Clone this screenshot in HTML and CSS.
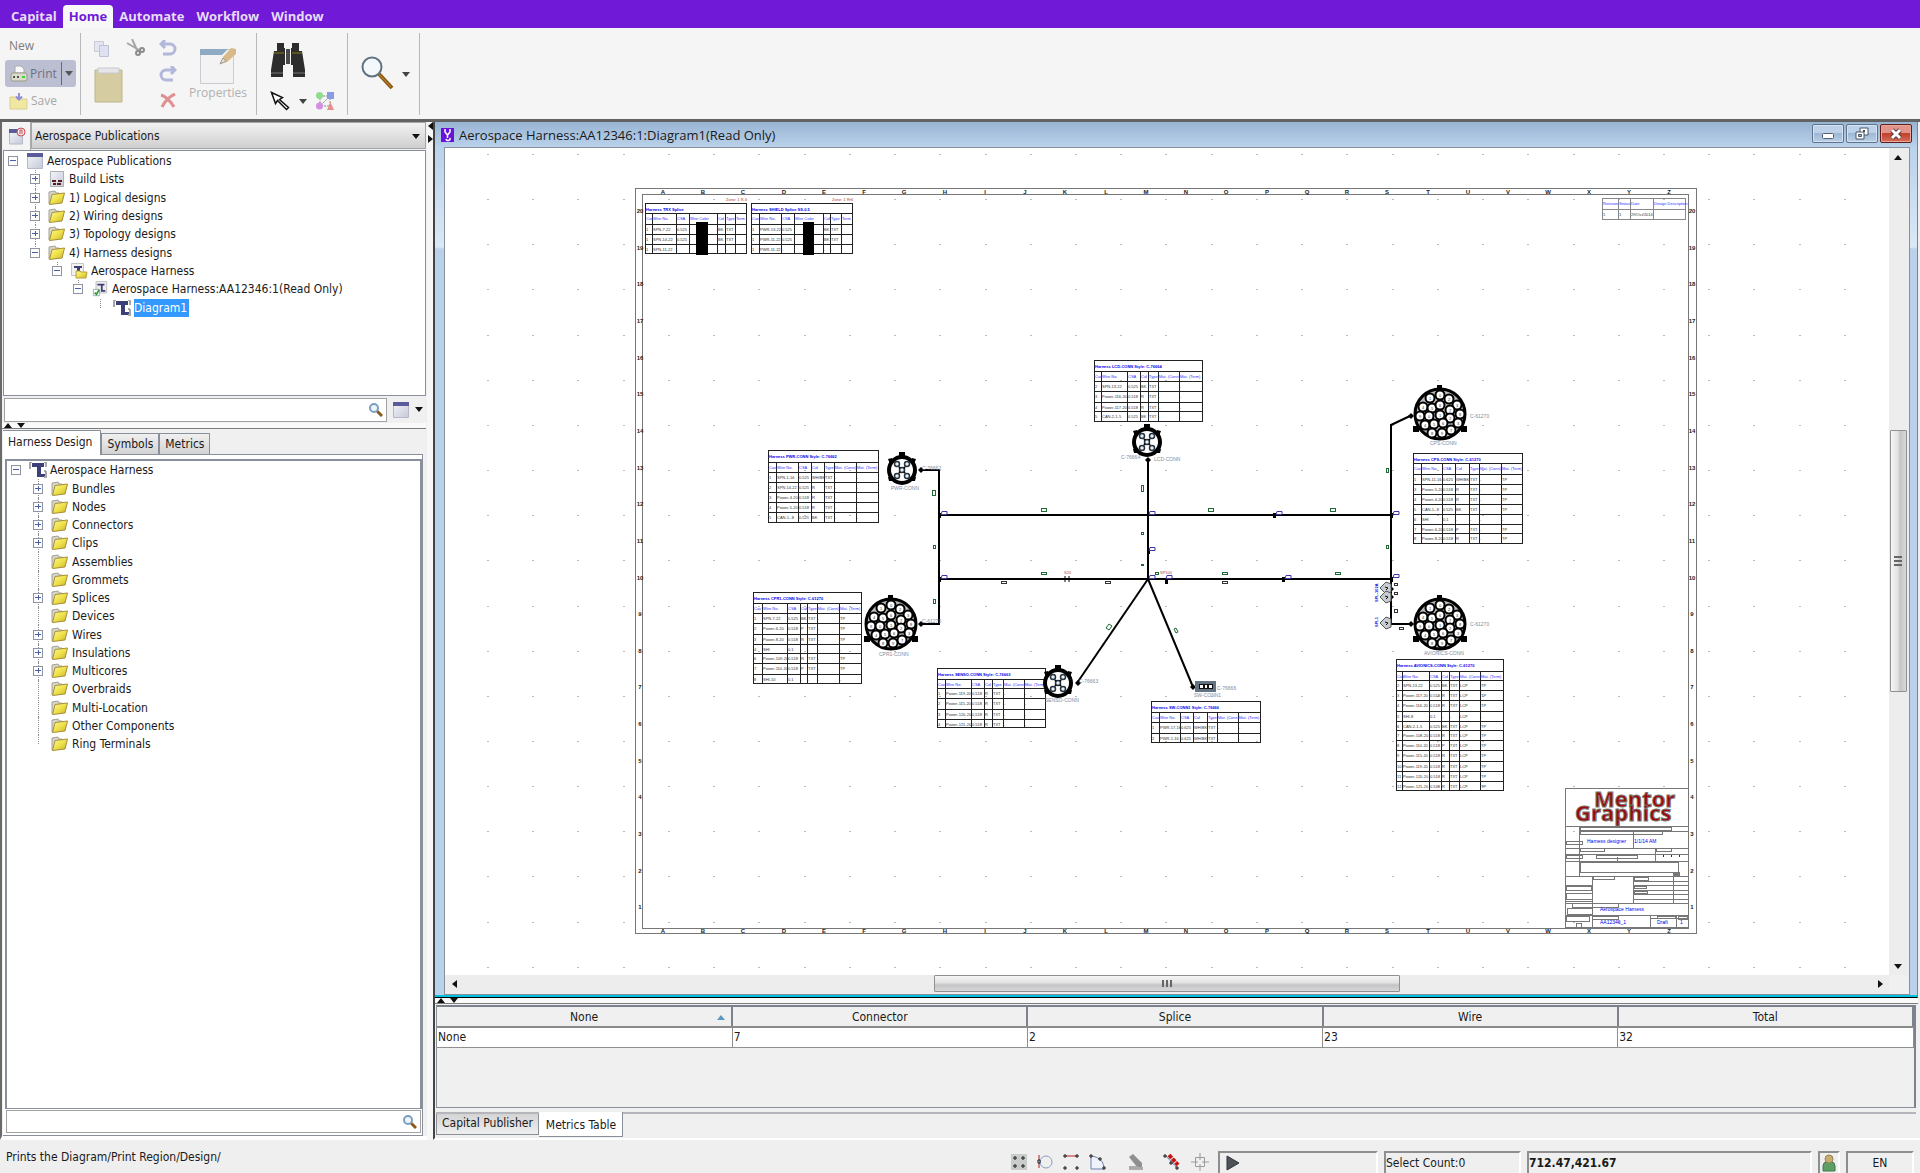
FILE: index.html
```html
<!DOCTYPE html>
<html lang="en">
<head>
<meta charset="utf-8">
<title>Capital</title>
<link rel="stylesheet" href="styles.css">
</head>
<body>
<svg class="defs" aria-hidden="true">
  <defs>
    <linearGradient id="gFolder" x1="0" y1="0" x2="1" y2="1"><stop offset="0" stop-color="#fbf7a0"/><stop offset=".5" stop-color="#efe24a"/><stop offset="1" stop-color="#c9b12a"/></linearGradient>
    <linearGradient id="gWin" x1="0" y1="0" x2="1" y2="1"><stop offset="0" stop-color="#f4f5fa"/><stop offset="1" stop-color="#c5c9d8"/></linearGradient>
  </defs>
  <symbol id="folder" viewBox="0 0 18 16"><path d="M1 14V2l6-1 1 2h3v2" fill="#d8d6cc" stroke="#a5a294"/><path d="M4 4.500l12.500-1.500-2.500 10-12.500 1.500z" fill="url(#gFolder)" stroke="#a58f3a"/></symbol>
  <symbol id="win" viewBox="0 0 16 16"><path d="M.5 1h15v14.500H.5z" fill="url(#gWin)" stroke="#b4b8c8"/><path d="M0 0h16v4H0z" fill="#5a5c9a"/></symbol>
  <symbol id="build" viewBox="0 0 16 16"><path d="M1.500.5h13v15h-13z" fill="url(#gWin)" stroke="#b0b0b0"/><path d="M3 9h4v2H3zM9 9h4v2H9zM4 12h3v2H4zM8 12h4v2H8z" fill="#5a1c1c"/></symbol>
  <symbol id="tee" viewBox="0 0 18 16"><path d="M3 1h12v4h-3v7h4v3H8V5H3z" fill="#3d3f78"/><path d="M1 0v7M3 0H1M17 0v5M15 0h2M17 9v7M15 9h2M15 15h2" stroke="#a8a8a8" stroke-width="2" fill="none"/></symbol>
  <symbol id="teefolder" viewBox="0 0 18 16"><path d="M1.500.5h12v12h-12z" fill="#f2f2f2" stroke="#c4c4c4"/><path d="M4 3h8v2h-2v4H7V5H4z" fill="#3d3f78"/><path d="M6 8h4l1 1h6l-1 6H6z" fill="url(#gFolder)" stroke="#b8a040"/></symbol>
  <symbol id="teecheck" viewBox="0 0 18 18"><path d="M4.500.5h12v13h-12z" fill="#eee" stroke="#bbb"/><path d="M6 3h8v2h-2v5h3v2h-5V5H6z" fill="#3d3f78"/><path d="M1.500 9.500h7v7h-7z" fill="#fff" stroke="#9aa"/><path d="M3 13l2 2 3-5" stroke="#2c9a3c" stroke-width="2" fill="none"/></symbol>
  <symbol id="lens" viewBox="0 0 14 14"><path d="M8 8l5 5" stroke="#8a5a1c" stroke-width="3"/><circle cx="5" cy="5" r="4" fill="#eef6fc" stroke="#7c9fc0" stroke-width="2"/></symbol>
</svg>

<nav class="menubar">
  <button class="menu">Capital</button>
  <button class="menu active">Home</button>
  <button class="menu">Automate</button>
  <button class="menu">Workflow</button>
  <button class="menu">Window</button>
</nav>

<header class="ribbon">
  <div class="group file">
    <button class="rb new">New</button>
    <div class="split">
      <button class="rb print"><svg width="18" height="17" viewBox="0 0 18 17"><path d="M5 8V1h6l3 3v4z" fill="#fafafa" stroke="#aaa"/><rect x="1" y="8" width="16" height="8" rx="2" fill="#dcdccc" stroke="#999985"/><path d="M3 12h2M7 12h2" stroke="#555" stroke-width="2"/><path d="M12 12h3" stroke="#3fd43f" stroke-width="2"/></svg>Print</button>
      <button class="drop" aria-label="Print options"><i class="tri"></i></button>
    </div>
    <button class="rb save"><svg width="20" height="18" viewBox="0 0 20 18"><path d="M1 17V5h6l1 2h10v10z" fill="#f0e7a0" stroke="#d8cf90"/><path d="M10 1v6M7 4.500l3 3 3-3" stroke="#8e90d8" stroke-width="2" fill="none"/></svg>Save</button>
  </div>
  <div class="group edit">
    <button class="ic copy" aria-label="Copy"><svg width="17" height="17" viewBox="0 0 17 17"><path d="M1.500 1.500h9v10h-9z" fill="#e4e5f0" stroke="#c8cad8"/><path d="M6.500 5.500h9v11h-9z" fill="#dfe1f0" stroke="#bfc2d6"/></svg></button>
    <button class="ic cut" aria-label="Cut"><svg width="20" height="18" viewBox="0 0 20 18"><path d="M1 4l12 7M6 0l5 11" stroke="#a6a6a6" stroke-width="2"/><circle cx="16" cy="11" r="2" fill="none" stroke="#8c8c8c" stroke-width="2"/><circle cx="12" cy="14" r="2" fill="none" stroke="#8c8c8c" stroke-width="2"/></svg></button>
    <button class="ic undo" aria-label="Undo"><svg width="18" height="16" viewBox="0 0 18 16"><path d="M3 4h8a4.500 4.500 0 0 1 0 10H4M6 0L2 4l4 4" stroke="#b3b7dc" stroke-width="3" fill="none"/></svg></button>
    <button class="ic paste" aria-label="Paste"><svg width="29" height="36" viewBox="0 0 29 36"><path d="M1 3h27v32H1z" fill="#d5cca2" stroke="#c0b68a"/><path d="M4 1h21v5H4z" fill="#e6e6ea" stroke="#c8c8d0"/></svg></button>
    <button class="ic redo" aria-label="Redo"><svg width="18" height="16" viewBox="0 0 18 16"><path d="M15 4H7a4.500 4.500 0 0 0 0 10h7M12 0l4 4-4 4" stroke="#b3b7dc" stroke-width="3" fill="none"/></svg></button>
    <button class="ic del" aria-label="Delete"><svg width="16" height="15" viewBox="0 0 16 15"><path d="M1 2c6 2 10 7 13 12M15 1C8 4 5 8 2 14" stroke="#e09090" stroke-width="3" fill="none"/></svg></button>
    <button class="props"><svg width="38" height="37" viewBox="0 0 38 37"><path d="M1.500 2.500h33v34h-33z" fill="#f3f3f3" stroke="#c9ccd2"/><path d="M1 2h28l-6 6H1z" fill="#8fabc4"/><path d="M21 17l3-7 8-9 5 1v5l-9 8z" fill="#d9b98a"/><path d="M21 17l3-6 3 3z" fill="#f2e6cf" stroke="#999"/></svg>Properties</button>
  </div>
  <div class="group find">
    <button class="ic" aria-label="Find"><svg width="36" height="36" viewBox="0 0 36 36"><path d="M7 1h7v5h1v17H13v12H1v-7L4 9h3zM29 1h-7v5h-1v17h2v12h12v-7L32 9h-3z" fill="#2d2d2d"/><path d="M16 7h4v15h-4z" fill="#4a4a4a"/><path d="M4 11h10M22 11h10" stroke="#8c7a1e"/><path d="M1 31h12M23 31h12" stroke="#777"/></svg></button>
    <div class="tools">
      <button class="ic" aria-label="Select"><svg width="20" height="20" viewBox="0 0 20 20"><path d="M1.500 1.500l4 11 2-3 9 9 2-2-9-8 3-2z" fill="#fff" stroke="#111" stroke-width="1.500"/></svg></button>
      <button class="ic" aria-label="Select options"><i class="tri"></i></button>
      <button class="ic" aria-label="Filter"><svg width="18" height="18" viewBox="0 0 18 18"><path d="M4 4h10v10H4zM5 13l9-9" fill="none" stroke="#888" stroke-dasharray="2 1"/><circle cx="3.500" cy="3.500" r="3.500" fill="#8fdc8f"/><path d="M11 0h7v7h-7z" fill="#8a9be6"/><circle cx="3.500" cy="14" r="3.500" fill="#d38fe6"/><path d="M14.500 10l3.500 8h-7z" fill="#e68f8f"/></svg></button>
    </div>
  </div>
  <div class="group zoomer">
    <button class="ic" aria-label="Zoom"><svg width="34" height="36" viewBox="0 0 34 36"><path d="M18 18l13 14" stroke="#8a5a14" stroke-width="4"/><path d="M17 17l13 14" stroke="#c88f38" stroke-width="1"/><circle cx="11" cy="11" r="9.500" fill="#f4f8fb" stroke="#5e7282" stroke-width="2"/></svg></button>
    <button class="ic" aria-label="Zoom options"><i class="tri"></i></button>
  </div>
</header>

<main class="workspace">
  <aside class="side">
    <div class="picker">
      <button class="pick" aria-label="Close project"><svg width="18" height="18" viewBox="0 0 18 18"><path d="M1.500 3h13v14h-13z" fill="url(#gWin)" stroke="#b4b8c8"/><path d="M1 2h10v4H1z" fill="#5a5c9a"/><circle cx="13" cy="5" r="4" fill="#fbeaea" stroke="#c84a50"/><path d="M11 6h4M12 5V3h2v2" stroke="#c84a50" fill="none"/></svg></button>
      <div class="combo"><select aria-label="Project"><option>Aerospace Publications</option></select><i class="tri"></i></div>
    </div>
    <ul class="tree project">
      <li class="d0"><button class="ex minus" aria-label="Collapse"></button><svg class="ti"><use href="#win"/></svg><span>Aerospace Publications</span></li>
      <li class="d1"><button class="ex" aria-label="Expand"></button><svg class="ti"><use href="#build"/></svg><span>Build Lists</span></li>
      <li class="d1"><button class="ex" aria-label="Expand"></button><svg class="ti"><use href="#folder"/></svg><span>1) Logical designs</span></li>
      <li class="d1"><button class="ex" aria-label="Expand"></button><svg class="ti"><use href="#folder"/></svg><span>2) Wiring designs</span></li>
      <li class="d1"><button class="ex" aria-label="Expand"></button><svg class="ti"><use href="#folder"/></svg><span>3) Topology designs</span></li>
      <li class="d1 last"><button class="ex minus" aria-label="Collapse"></button><svg class="ti"><use href="#folder"/></svg><span>4) Harness designs</span></li>
      <li class="d2 last"><button class="ex minus" aria-label="Collapse"></button><svg class="ti"><use href="#teefolder"/></svg><span>Aerospace Harness</span></li>
      <li class="d3 last"><button class="ex minus" aria-label="Collapse"></button><svg class="ti"><use href="#teecheck"/></svg><span>Aerospace Harness:AA12346:1(Read Only)</span></li>
      <li class="d4 last"><i class="noex"></i><svg class="ti"><use href="#tee"/></svg><span class="selected">Diagram1</span></li>
    </ul>
    <div class="searchrow">
      <div class="search"><input type="text" aria-label="Search project"><svg width="14" height="14"><use href="#lens"/></svg></div>
      <button class="view" aria-label="View"><svg width="16" height="16"><use href="#win"/></svg><i class="tri"></i></button>
    </div>
    <div class="hsplit"><i class="tri up"></i><i class="tri"></i></div>
    <div class="tabs">
      <button class="tab on">Harness Design</button><button class="tab">Symbols</button><button class="tab">Metrics</button>
    </div>
    <section class="harness">
      <ul class="tree parts">
        <li class="d0"><button class="ex minus" aria-label="Collapse"></button><svg class="ti"><use href="#tee"/></svg><span>Aerospace Harness</span></li>
        <li class="d1"><button class="ex" aria-label="Expand"></button><svg class="ti"><use href="#folder"/></svg><span>Bundles</span></li>
        <li class="d1"><button class="ex" aria-label="Expand"></button><svg class="ti"><use href="#folder"/></svg><span>Nodes</span></li>
        <li class="d1"><button class="ex" aria-label="Expand"></button><svg class="ti"><use href="#folder"/></svg><span>Connectors</span></li>
        <li class="d1"><button class="ex" aria-label="Expand"></button><svg class="ti"><use href="#folder"/></svg><span>Clips</span></li>
        <li class="d1"><i class="noex"></i><svg class="ti"><use href="#folder"/></svg><span>Assemblies</span></li>
        <li class="d1"><i class="noex"></i><svg class="ti"><use href="#folder"/></svg><span>Grommets</span></li>
        <li class="d1"><button class="ex" aria-label="Expand"></button><svg class="ti"><use href="#folder"/></svg><span>Splices</span></li>
        <li class="d1"><i class="noex"></i><svg class="ti"><use href="#folder"/></svg><span>Devices</span></li>
        <li class="d1"><button class="ex" aria-label="Expand"></button><svg class="ti"><use href="#folder"/></svg><span>Wires</span></li>
        <li class="d1"><button class="ex" aria-label="Expand"></button><svg class="ti"><use href="#folder"/></svg><span>Insulations</span></li>
        <li class="d1"><button class="ex" aria-label="Expand"></button><svg class="ti"><use href="#folder"/></svg><span>Multicores</span></li>
        <li class="d1"><i class="noex"></i><svg class="ti"><use href="#folder"/></svg><span>Overbraids</span></li>
        <li class="d1"><i class="noex"></i><svg class="ti"><use href="#folder"/></svg><span>Multi-Location</span></li>
        <li class="d1"><i class="noex"></i><svg class="ti"><use href="#folder"/></svg><span>Other Components</span></li>
        <li class="d1 last"><i class="noex"></i><svg class="ti"><use href="#folder"/></svg><span>Ring Terminals</span></li>
      </ul>
      <div class="search"><input type="text" aria-label="Search harness"><svg width="14" height="14"><use href="#lens"/></svg></div>
    </section>
  </aside>

  <div class="vsplit"><i class="tri left"></i><i class="tri right"></i></div>

  <div class="content">
    <section class="window">
      <div class="titlebar">
        <svg width="13" height="14" viewBox="0 0 13 14"><path d="M0 0h13v14H0z" fill="#6a12d8"/><path d="M4 1v3l2.500 3L9 4V1M6.500 7v3M5 11a2 2 0 1 0 4-1" stroke="#fff" stroke-width="1.500" fill="none"/></svg>
        <h1>Aerospace Harness:AA12346:1:Diagram1(Read Only)</h1>
        <button class="wb min" aria-label="Minimize"><svg width="12" height="6" viewBox="0 0 12 6"><rect x=".5" y=".5" width="11" height="5" rx="1" fill="#fff" stroke="#555f70"/></svg></button>
        <button class="wb" aria-label="Restore"><svg width="14" height="13" viewBox="0 0 14 13"><path d="M5 1h8v7H5z" fill="#fff" stroke="#4a5468"/><path d="M8 3h2v2H8z" fill="#4a5468"/><path d="M1 5h8v7H1z" fill="#fff" stroke="#4a5468"/><path d="M3.500 7.500h3v2h-3z" fill="#9cb4d0" stroke="#4a5468"/></svg></button>
        <button class="wb close" aria-label="Close"><svg width="14" height="12" viewBox="0 0 14 12"><path d="M3 2l8 8M11 2l-8 8" stroke="#5a3a3a" stroke-width="5"/><path d="M3 2l8 8M11 2l-8 8" stroke="#fff" stroke-width="3"/></svg></button>
      </div>
      <div class="client">
        <svg id="diagram" viewBox="445 148 1444 827" role="img" aria-label="Harness diagram"></svg>
        <div class="vbar"><button class="sb" aria-label="Scroll up"><i class="tri up"></i></button><div class="before"></div><div class="thumb"><i></i><i></i><i></i></div><div class="after"></div><button class="sb" aria-label="Scroll down"><i class="tri"></i></button></div>
        <div class="hbar"><button class="sb" aria-label="Scroll left"><i class="tri left"></i></button><div class="before"></div><div class="thumb"><i></i><i></i><i></i></div><div class="after"></div><button class="sb" aria-label="Scroll right"><i class="tri right"></i></button></div>
        <div class="corner"></div>
      </div>
    </section>
    <div class="hsplit"><i class="tri up"></i><i class="tri"></i></div>
    <section class="metrics">
      <div class="tablebox">
        <table>
          <thead><tr><th><span>None</span><i class="tri up sort"></i></th><th>Connector</th><th>Splice</th><th>Wire</th><th>Total</th></tr></thead>
          <tbody><tr><td>None</td><td>7</td><td>2</td><td>23</td><td>32</td></tr></tbody>
        </table>
      </div>
      <div class="btabs"><button class="btab">Capital Publisher</button><button class="btab on">Metrics Table</button></div>
    </section>
  </div>
</main>

<footer class="status">
  <p>Prints the Diagram/Print Region/Design/</p>
  <div class="snaps">
    <button aria-label="Grid snap"><svg width="16" height="16" viewBox="0 0 16 16"><path d="M0 0h16v16H0z" fill="#c9cccb"/><path d="M3 3h2v2H3zM11 3h2v2h-2zM3 11h2v2H3zM11 11h2v2h-2z" fill="#fff" stroke="#111"/></svg></button>
    <button aria-label="Tangent snap"><svg width="16" height="16" viewBox="0 0 16 16"><circle cx="9" cy="8" r="6" fill="none" stroke="#8c9cc8"/><path d="M2 1v13" stroke="#b02020"/><path d="M1 6h2v3H1z" fill="#fff" stroke="#111"/></svg></button>
    <button aria-label="Line snap"><svg width="16" height="18" viewBox="0 0 16 18"><path d="M2 3h12" stroke="#c02020"/><path d="M1 2h2v2H1zM13 2h2v2h-2zM1 14h2v2H1zM13 14h2v2h-2z" fill="#fff" stroke="#111"/></svg></button>
    <button aria-label="Arc snap"><svg width="18" height="18" viewBox="0 0 18 18"><path d="M2 3v13h13C15 9 11 4 2 3" fill="#eef2fa" stroke="#6a80b0"/><path d="M1 2h2v2H1zM10 5h2v2h-2zM14 14h2v2h-2z" fill="#fff" stroke="#111"/></svg></button>
    <button class="erase" aria-label="Erase"><svg width="16" height="16" viewBox="0 0 16 16"><path d="M1 3l4-3 9 9v4H9z" fill="#8f8f8f"/><path d="M1 12h8l1 1h5v3H1z" fill="#ababab"/></svg></button>
    <button class="step" aria-label="Step snap"><svg width="18" height="18" viewBox="0 0 18 18"><path d="M3 3l12 13" stroke="#6a80b0"/><path d="M6 2l9 10" stroke="#c81414" stroke-width="4" stroke-dasharray="4 1"/><path d="M1 2h2v2H1zM7 9h2v2H7zM13 14h2v2h-2z" fill="#fff" stroke="#111"/></svg></button>
    <button class="center" aria-label="Center snap"><svg width="18" height="18" viewBox="0 0 18 18"><path d="M4.500 4.500h9v9h-9zM9 0v7M9 11v7M0 9h7M11 9h7" fill="none" stroke="#9a9a9a"/></svg></button>
  </div>
  <div class="cell play"><svg width="14" height="16" viewBox="0 0 14 16"><path d="M1 1l12 7-12 7z" fill="#50525a" stroke="#33353c"/></svg></div>
  <div class="cell count">Select Count:0</div>
  <div class="cell coords">712.47,421.67</div>
  <div class="cell user"><svg width="14" height="18" viewBox="0 0 14 18"><path d="M1 17v-5a4 4 0 0 1 4-4h4a4 4 0 0 1 4 4v5z" fill="#5f9f66" stroke="#417a48"/><circle cx="7" cy="5" r="4" fill="#c8ad72" stroke="#9a8350"/></svg></div>
  <div class="cell lang">EN</div>
</footer>
<script src="diagram.js"></script>
</body>
</html>
```
FILE: styles.css
```css
* { box-sizing: border-box; }
body { margin: 0; height: 100vh; display: flex; flex-direction: column; overflow: hidden; background: #f0f0f0; color: #1a1a1a; font: 12px/18px "DejaVu Sans Condensed", "DejaVu Sans", sans-serif; }
button { margin: 0; padding: 0; border: 0; background: none; font: inherit; color: inherit; }
svg { display: block; flex: none; }
ul { margin: 0; padding: 0; list-style: none; }
.defs { position: absolute; width: 0; height: 0; }

.tri { display: block; width: 0; height: 0; border: 4px solid transparent; border-top: 5px solid #111; border-bottom: 0; }
.tri.up { border: 4px solid transparent; border-top: 0; border-bottom: 5px solid #111; }
.tri.left { border: 4px solid transparent; border-left: 0; border-right: 5px solid #111; }
.tri.right { border: 4px solid transparent; border-right: 0; border-left: 5px solid #111; }

.menubar { flex: none; height: 28px; padding: 5px 0 0 5px; display: flex; background: #7019d6; }
.menu { height: 23px; padding: 0 6px 2px; font: bold 13px/20px "Open Sans", "Noto Sans", sans-serif; color: #e6dcf8; border-radius: 4px 4px 0 0; }
.menu.active { background: #f8f8f8; color: #7019d6; }

.ribbon { flex: none; height: 91px; padding: 5px 0; display: flex; background: #f5f5f5; font: 12px/18px "Open Sans", "Noto Sans", sans-serif; color: #7d7d7d; }
.group { border-right: 1px solid #b9b9b9; height: 82px; }
.file { width: 81px; padding: 4px 4px 0 5px; display: flex; flex-direction: column; }
.rb { display: flex; align-items: center; gap: 2px; height: 18px; }
.new { padding-left: 4px; }
.split { display: flex; height: 27px; margin: 5px 0 5px; background: #bcbfd2; border-radius: 3px; color: #6d7080; }
.print { padding-left: 5px; height: 27px; }
.drop { margin: 2px 0; padding: 0 3px; margin-left: auto; border-left: 1px solid #666a78; display: flex; align-items: center; }
.drop .tri { border-top-color: #555; }
.save { padding-left: 4px; color: #a8a8a8; }
.edit { width: 176px; padding: 4px 8px 0 12px; display: grid; grid-template-columns: 30px 26px 38px 62px; grid-template-rows: 22px 30px 22px; align-items: center; justify-items: center; }
.copy { grid-area: 1 / 1; justify-self: start; } .cut { grid-area: 1 / 2; } .undo { grid-area: 1 / 3; }
.paste { grid-area: 2 / 1 / 4 / 2; } .redo { grid-area: 2 / 3; } .del { grid-area: 3 / 3; }
.props { grid-area: 1 / 4 / 4 / 5; display: flex; flex-direction: column; align-items: center; color: #b0b0b0; }
.find { width: 91px; padding: 9px 10px 0 13px; display: flex; flex-direction: column; gap: 13px; }
.find > .ic { width: 36px; }
.tools { display: flex; align-items: center; gap: 9px; }
.zoomer { width: 72px; display: flex; align-items: center; gap: 7px; padding-left: 13px; }
.find .tri, .zoomer .tri { border-top-color: #444; }

.workspace { flex: 1; min-height: 0; display: flex; border-top: 3px solid #636363; }
.side { width: 427px; flex: none; display: flex; flex-direction: column; border-left: 2px solid #6a6a6a; padding-right: 1px; background: #f0f0f0; border-bottom: 4px solid #fff; }
.picker { display: flex; flex: none; height: 28px; padding-left: 1px; }
.pick { width: 28px; display: flex; align-items: center; justify-content: center; background: #f4f4f4; border-right: 1px solid #aaa; }
.combo { flex: 1; position: relative; }
.combo select { appearance: none; width: 100%; height: 27px; margin: 0; padding: 0 4px 0 3px; border: 1px solid #a6a6a6; border-radius: 0; background: linear-gradient(#f2f2f2, #cfcfcf); color: #1a1a1a; font: inherit; }
.combo .tri { position: absolute; right: 6px; top: 12px; pointer-events: none; }

.tree { background: #fff; display: flex; flex-direction: column; }
.tree li { flex: 1 1 0; min-height: 0; display: flex; align-items: center; position: relative; padding-left: 4px; }
.tree li.d1 { padding-left: 26px; } .tree li.d2 { padding-left: 48px; } .tree li.d3 { padding-left: 69px; } .tree li.d4 { padding-left: 91px; }
.tree li::before { content: ""; position: absolute; top: 0; bottom: 0; margin-left: 5px; border-left: 1px dotted #8c8c8c; }
.tree li.d0::before { display: none; }
.tree li.last::before { bottom: 50%; }
.ex { position: relative; width: 10px; height: 10px; flex: none; border: 1px solid #8f95a0; background: #fdfdfd; margin-right: 8px; }
.noex { width: 10px; flex: none; margin-right: 8px; }
.ex::before { content: ""; position: absolute; left: 1px; right: 1px; top: 3px; height: 1px; background: #4a5fa8; }
.ex::after { content: ""; position: absolute; top: 1px; bottom: 2px; left: 4px; width: 1px; background: #4a5fa8; }
.ex.minus::after { display: none; }
.ti { width: 18px; height: 16px; margin-right: 3px; position: relative; }
.tree li > span { line-height: 18px; white-space: nowrap; }
.tree li > .selected { background: #3399ff; color: #fff; padding-right: 2px; }
.project { flex: none; height: 246px; margin-left: 1px; border: 1px solid #8a8f9c; padding: 1px 0 78px; }

.searchrow { flex: none; height: 27px; display: flex; padding: 1px 3px 1px 2px; gap: 6px; align-items: center; }
.search { flex: 1; height: 24px; display: flex; align-items: center; background: #fff; border: 1px solid #a2a2a2; padding-right: 3px; }
.search input { flex: 1; min-width: 0; height: 100%; border: 0; background: none; outline: 0; font: inherit; }
.view { display: flex; align-items: center; gap: 6px; }
.hsplit { flex: none; height: 6px; display: flex; align-items: flex-end; gap: 5px; padding-left: 2px; background: #fafafa; border-bottom: 1px solid #7c7c7c; }
.tabs { flex: none; height: 25px; margin: 1px 3px 0 1px; display: flex; align-items: flex-end; border-bottom: 1px solid #8a8f9c; }
.tab { height: 21px; padding: 0 5px; border: 1px solid #8a8f9c; border-bottom: 0; background: linear-gradient(#f0f0f0, #d2d2d2); }
.tab.on { height: 25px; padding: 0 8px 3px 5px; background: #fff; margin: 0 0 -1px; border-left: 0; }
.harness { flex: 1; min-height: 0; display: flex; flex-direction: column; margin: 0 3px 0 1px; padding: 4px 0 0 2px; background: #fff; border-right: 1px solid #8a8f9c; border-bottom: 1px solid #8a8f9c; }
.parts { flex: 1; min-height: 0; border: 2px solid #8a8f9c; border-bottom-width: 1px; }
.parts li { flex: 0 0 18px; }
.parts li:nth-child(4n+2) { flex-basis: 19px; }
.harness .search { flex: none; height: 23px; margin: 1px 1px 2px 1px; }

.vsplit { width: 6px; flex: none; background: #f7f7f7; display: flex; flex-direction: column; gap: 5px; align-items: flex-end; }
.content { flex: 1; min-width: 0; display: flex; flex-direction: column; border-left: 2px solid #444; border-bottom: 2px solid #fff; padding-right: 2px; }
.window { flex: 1; min-height: 0; display: flex; flex-direction: column; border-right: 1px solid #00b4d0; border-bottom: 1px solid #000; box-shadow: inset 0 -2px #00c0e0; padding: 0 7px 2px 9px; background: linear-gradient(#98b4d3, #bad2eb 25px, #dbe8f6 125px, #b9d1ea 127px); }
.titlebar { flex: none; height: 25px; display: flex; align-items: center; }
.titlebar > svg { margin: 0 5px 0 -3px; }
.titlebar h1 { margin: 0; flex: 1; font: 13px/20px "Open Sans", "Noto Sans", sans-serif; color: #1a1a1a; white-space: nowrap; }
.wb { width: 32px; height: 19px; margin: 0 0 2px 2px; display: flex; align-items: center; justify-content: center; border: 1px solid #60738c; border-radius: 2px; box-shadow: inset 0 0 0 1px #d4e2f1; background: linear-gradient(#bdd2e8 50%, #9db8d6 50%, #b9cfe6); }
.wb.min { padding-top: 4px; }
.wb.close { margin-right: -2px; border-color: #5e1c1c; box-shadow: inset 0 0 0 1px #e8a898; background: linear-gradient(#e2948a 50%, #c0402c 50%, #d4705c); }
.client { flex: 1; min-height: 0; display: grid; grid-template-columns: minmax(0, 1fr) 20px; grid-template-rows: minmax(0, 1fr) 19px; border: 1px solid #8a8f9c; background: #fff; }
#diagram { width: 100%; height: 100%; overflow: hidden; }
.vbar, .hbar { display: flex; background: #ededed; align-items: center; }
.vbar { flex-direction: column; padding-right: 2px; }
.hbar { padding-bottom: 2px; }
.vbar .sb { height: 18px; width: 18px; display: flex; justify-content: center; align-items: center; }
.hbar .sb { width: 18px; height: 17px; display: flex; justify-content: center; align-items: center; }
.vbar .before { flex: 265; } .vbar .after { flex: 266; }
.hbar .before, .hbar .after { flex: 471; }
.thumb { border: 1px solid #909090; border-radius: 1px; display: flex; align-items: center; justify-content: center; gap: 2px; }
.vbar .thumb { flex: 260; width: 17px; flex-direction: column; background: linear-gradient(90deg, #f6f6f6, #e2e2e2 45%, #c4c4c8 60%, #d8d8d8); }
.hbar .thumb { flex: 464; height: 17px; background: linear-gradient(#f6f6f6, #e2e2e2 45%, #c4c4c8 60%, #d8d8d8); }
.vbar .thumb i { width: 8px; height: 2px; background: #666; }
.hbar .thumb i { width: 2px; height: 7px; background: #666; }
.corner { background: #f0f0f0; }

.metrics { flex: none; height: 134px; padding-left: 1px; margin-right: 2px; display: flex; flex-direction: column; }
.tablebox { height: 103px; margin-top: 1px; border-top: 2px solid #7c818e; border-right: 2px solid #7c818e; border-bottom: 1px solid #8a8f9c; border-left: 1px solid #8a8f9c; background: #f0f0f0; }
table { width: 100%; border-collapse: collapse; table-layout: fixed; }
th { position: relative; height: 20px; padding: 0; font-weight: normal; border-right: 2px solid #7e828c; border-bottom: 2px solid #8a8a8a; background: #f0f0f0; }
td { height: 19px; padding: 0 0 1px 1px; background: #fff; border-right: 1px solid #8f8f8f; border-bottom: 1px solid #8f8f8f; }
.sort { position: absolute; right: 6px; top: 8px; }
.tri.up.sort { border-bottom-color: #5a9ac0; }
.btabs { margin-top: 4px; height: 26px; display: flex; align-items: flex-start; border-top: 2px solid #b4b6bc; }
.btab { height: 21px; padding: 0 5px 2px 5px; border: 1px solid #8a8f9c; border-top: 0; background: linear-gradient(#d4d4d4, #efefef); }
.btab.on { height: 25px; margin-top: -2px; padding: 2px 6px 0 7px; background: #fff; border-left: 0; }

.status { flex: none; height: 33px; display: flex; background: #efefef; padding-right: 6px; }
.status p { flex: 1; margin: 0; padding: 8px 0 0 6px; }
.snaps { display: flex; align-items: center; gap: 10px; padding: 11px 9px 0 0; }
.snaps .erase { margin-left: 11px; } .snaps .step { margin-left: 9px; }
.cell { margin-top: 11px; border: 2px solid #fff; border-top-color: #8e8e8e; border-left-color: #8e8e8e; border-bottom: 0; display: flex; align-items: center; margin-right: 6px; }
.play { width: 160px; padding-left: 6px; }
.count { width: 137px; }
.coords { width: 285px; font-weight: bold; }
.user { width: 22px; justify-content: center; }
.lang { width: 68px; margin-right: 0; justify-content: center; }

.tiny { font: 4px "Liberation Sans", Arial, sans-serif; fill: #333; }
.head { fill: #3333ff; }
.title { font: bold 4px "Liberation Sans", Arial, sans-serif; fill: #0000f0; }
.zone { font: 4px "Liberation Sans", Arial, sans-serif; fill: #b04040; }
.tag { font: 5px "Liberation Sans", Arial, sans-serif; fill: #7f8ca0; }
.rule { font: bold 6px "Liberation Sans", Arial, sans-serif; fill: #222; text-anchor: middle; }
.stamp { font: 5px "Liberation Sans", Arial, sans-serif; fill: #0000f0; }
.brand { font: bold 22px "Open Sans", "Noto Sans", sans-serif; fill: #a00808; stroke: #777; stroke-width: 1px; }
```
FILE: diagram.js
```js
// Builds the harness drawing: sheet frame, wire tables, bundles, connectors and title block.
const out = [];
const R = Math.round;
const line = (x1, y1, x2, y2, c = '#000', w = 1) => out.push(`<path d="M${x1} ${y1}L${x2} ${y2}" stroke="${c}" stroke-width="${w}" fill="none"/>`);
const crisp = (x1, y1, x2, y2, c = '#222') => out.push(x1 === x2
  ? `<rect x="${R(x1)}" y="${R(y1)}" width="1" height="${R(y2) - R(y1)}" fill="${c}"/>`
  : `<rect x="${R(x1)}" y="${R(y1)}" width="${R(x2) - R(x1) + 1}" height="1" fill="${c}"/>`);
const box = (x, y, w, h, c = '#777', f = 'none') => out.push(`<rect x="${R(x) + .5}" y="${R(y) + .5}" width="${R(w)}" height="${R(h)}" stroke="${c}" fill="${f}"/>`);
const text = (x, y, s, cls) => out.push(`<text x="${R(x)}" y="${R(y)}" class="${cls}">${s}</text>`);

for (let i = 0; i < 31; i++) for (let j = 0; j < 19; j++)
  out.push(`<rect x="${R(487 + i * 45.23)}" y="${R(154 + j * 45.15)}" width="2" height="1" fill="#bbb"/>`);

box(635, 188, 1061, 745);
box(642, 194, 1046, 734);
for (let i = 0; i < 26; i++) {
  const x = R(663 + i * 40.24), s = String.fromCharCode(65 + i);
  text(x, 194, s, 'rule'); text(x, 933, s, 'rule');
}
for (let i = 0; i < 20; i++) {
  const y = R(213 + i * 36.65);
  text(640, y, 20 - i, 'rule'); text(1692, y, 20 - i, 'rule');
}

function table(cols, rows, title, heads, data, c = '#222') {
  const x0 = cols[0], x1 = cols[cols.length - 1], y0 = rows[0], y1 = rows[rows.length - 1];
  const top = title ? rows[1] : y0;
  rows.forEach(y => crisp(x0, y, x1, y, c));
  cols.forEach((x, i) => crisp(x, i && i < cols.length - 1 ? top : y0, x, y1 + 1, c));
  if (title) text(x0 + 1, y0 + 8, title, 'title');
  const first = title ? 1 : 0;
  heads.forEach((h, i) => text(cols[i] + 1, rows[first] + 7, h, 'tiny head'));
  data.forEach((r, j) => r.split('|').forEach((v, i) => text(cols[i] + 1, rows[first + 1 + j] + 7, v, 'tiny')));
}
const H = ['Cav', 'Wire No.', 'CSA', 'Col', 'Type', 'Mat. (Conn)', 'Mat. (Term)'];
const HW = ['Cav', 'Wire No.', 'CSA', 'Wire Color', 'Col', 'Type', 'Term'];
text(726, 201, 'Zone: 1 R-6', 'zone');
text(832, 201, 'Zone: 1 R-6', 'zone');
table([645, 652, 676, 689, 717, 725, 735, 746], [203, 213, 224, 234, 244, 253], 'Harness TRX Splice', HW,
  ['1|SPN-7-22|0.525||BK|TXT', '1|SPN-14-22|0.525||BK|TXT', '1|SPN-11-22|-||-|-']);
table([751, 759, 781, 794, 823, 830, 841, 852], [203, 213, 224, 234, 244, 253], 'Harness SHIELD Splice SS-0.5', HW,
  ['1|PWR-13-22|0.525||BK|TXT', '1|PWR-11-22|0.525||BK|TXT', '1|PWR-11-22|-||-|-']);
out.push('<rect x="696" y="222" width="12" height="33"/><rect x="803" y="222" width="11" height="33"/>');
table([1602, 1618, 1630, 1653, 1685], [198, 209, 219], '', ['Revision', 'Status', 'Date', 'Design Description'], ['1|1|29/Oct/2014|'], '#888');
table([1094, 1101, 1127, 1140, 1148, 1158, 1179, 1202], [360, 371, 381, 391, 402, 411, 421], 'Harness LCD-CONN Style: C-76664', H,
  ['2|SPN-13-22|0.525|BK|TXT|-|-', '3|Power-116-20|0.518|R|TXT|-|-', '4|Power-117-20|0.518|R|TXT|-|-', '5|CAN-2-1-5|0.525|BK|TXT|-|-']);
table([768, 776, 798, 811, 824, 834, 856, 878], [450, 462, 472, 482, 492, 502, 512, 522], 'Harness PWR-CONN Style: C-76662', H,
  ['1|SPN-1-16|0.525|WH/BK|TXT|-|-', '2|SPN-14-22|0.525|R|TXT|-|-', '3|Power-4-20|0.518|R|TXT|-|-', '4|Power-5-20|0.518|R|TXT|-|-', '5|CAN-1--8|0.525|BK|TXT|-|-']);
table([753, 762, 787, 800, 807, 817, 839, 861], [592, 603, 613, 623, 634, 644, 653, 663, 674, 683], 'Harness CPR1-CONN Style: C-61270', H,
  ['1|SPN-7-22|0.525|BK|TXT|-|TP', '2|Power-6-20|0.518|P|TXT|-|TP', '3|Power-8-20|0.518|R|TXT|-|TP', '4|SHI|0.1|-|-|-|-', '6|Power-109-20|0.518|R|TXT|-|TP', '7|Power-110-20|0.518|P|TXT|-|TP', '8|SHI-10|0.1|-|-|-|-']);
table([937, 945, 971, 984, 992, 1003, 1024, 1045], [668, 679, 688, 698, 709, 719, 727], 'Harness SENSO-CONN Style: C-76663', H,
  ['1|Power-119-20|0.518|R|TXT|-|-', '2|Power-115-20|0.518|R|TXT|-|-', '3|Power-120-20|0.518|R|TXT|-|-', '4|Power-121-20|0.518|R|TXT|-|-']);
table([1151, 1159, 1180, 1193, 1207, 1217, 1238, 1260], [701, 712, 722, 733, 742], 'Harness SW-CONN1 Style: C-76666', H,
  ['1|PWR-17-16|0.625|WH/BK|TXT|-|-', '2|PWR-1-16|0.625|WH/BK|TXT|-|-']);
table([1413, 1421, 1442, 1455, 1469, 1479, 1501, 1522], [453, 463, 474, 484, 494, 504, 514, 524, 533, 543], 'Harness CPS-CONN Style: C-61270', H,
  ['1|SPN-11-16|0.625|WH/BK|TXT|-|TP', '3|Power-5-20|0.518|R|TXT|-|TP', '4|Power-4-20|0.518|R|TXT|-|TP', '5|CAN-1--8|0.525|BK|TXT|-|TP', '6|SHI|0.1|-|-|-|-', '7|Power-6-20|0.518|P|TXT|-|TP', '8|Power-8-20|0.518|R|TXT|-|TP']);
table([1396, 1402, 1429, 1441, 1449, 1459, 1480, 1503], [659, 671, 680, 690, 700, 711, 721, 730, 740, 750, 761, 771, 781, 790], 'Harness AVIONICS-CONN Style: C-61270', H,
  ['2|SPN-13-22|0.525|BK|TXT|LCP|TP', '3|Power-117-20|0.518|R|TXT|LCP|TP', '4|Power-116-20|0.518|R|TXT|LCP|TP', '5|SHI-8|0.1|-|-|LCP|-', '6|CAN-2-1-5|0.525|BK|TXT|LCP|TP', '7|Power-108-20|0.518|R|TXT|LCP|TP', '8|Power-110-20|0.518|P|TXT|LCP|TP', '9|Power-115-20|0.518|R|TXT|LCP|TP', '10|Power-119-20|0.518|R|TXT|LCP|TP', '11|Power-120-20|0.518|R|TXT|LCP|TP', '12|Power-121-20|0.518|R|TXT|LCP|TP']);

// Bundles
out.push('<path d="M922 470H939V624H922M939 515H1391M939 579H1391M1148 460V579M1410 416L1391 425V624H1410" stroke="#000" stroke-width="2" fill="none"/>');
line(1148, 579, 1077, 683, '#000', 2);
line(1148, 579, 1193, 687, '#000', 2);
[[921, 470], [921, 624], [1148, 460], [1078, 683], [1193, 687], [1411, 416], [1411, 624], [1391, 589], [1391, 597]].forEach(([x, y]) =>
  out.push(`<path d="M${x - 3} ${y}l3-3 3 3-3 3z"/>`));
[[1274, 515], [1391, 515], [1391, 579], [1283, 579], [939, 515], [939, 579], [1148, 551], [1166, 581]].forEach(([x, y]) =>
  out.push(`<rect x="${x - 1}" y="${y - 2}" width="3" height="5"/>`));
[[1065, 579], [1069, 579]].forEach(([x, y]) => line(x, y - 3, x, y + 3));

// Bundle length boxes
const G = '#1d6b34', P = '#3a36a8';
[[932, 490, 3, 5], [933, 545, 2, 3], [933, 599, 2, 4], [1141, 485, 2, 6], [1141, 532, 2, 2], [1141, 564, 2, 1], [1041, 508, 5, 3], [1208, 508, 5, 3], [1041, 572, 5, 2], [1222, 572, 5, 2], [1155, 572, 3, 2],
  [1386, 468, 2, 4], [1386, 545, 2, 3], [1330, 508, 5, 3], [1335, 572, 5, 2]].forEach(([x, y, w, h]) => box(x, y, w, h, G));
[[1001, 581, 5, 2], [1105, 581, 5, 2], [1222, 581, 5, 2], [1394, 583, 3, 2], [1394, 592, 3, 2], [1394, 609, 3, 3], [1399, 627, 4, 2]].forEach(([x, y, w, h]) => box(x, y, w, h, '#333'));
[[941, 512], [1149, 512], [1276, 512], [941, 576], [1149, 576], [1166, 576], [1285, 576], [1149, 548], [1393, 512], [1393, 575]].forEach(([x, y]) =>
  out.push(`<path d="M${x} ${y + 2.5}l1-3h5v3z" fill="none" stroke="${P}"/>`));
out.push(`<path d="M1106 648l3-4 3 2-3 4zM1174 629l2-1 2 4-2 1z" transform="translate(0 0)" fill="none" stroke="${G}"/>`.replace('M1106 648', 'M1106 628').replace(' transform="translate(0 0)"', ''));
text(1064, 574, 'S20', 'zone'); text(1160, 574, 'SP100', 'zone');

// Splice symbols beside the right trunk
[588, 597, 623].forEach(y => out.push(`<path d="M1380 ${y}l6-6 5 2v8l-5 2z" fill="#c6ccd0" stroke="#555"/><path d="M1385 ${y - 1}l3 1-2 2" stroke="#111" fill="none"/>`));
out.push('<text transform="translate(1378 602) rotate(-90)" class="title">SPL-102A</text><text transform="translate(1378 627) rotate(-90)" class="title">SPL1</text>');

function smallConn(x, y) {
  out.push(`<g transform="translate(${x} ${y})"><path d="M-3-18h6v5h-6zM-14-11l4-1 2 4-4 2zM14-11l-4-1-2 4 4 2zM-14 7l5-1v5h-4zM14 7l-5-1v5h4z"/><circle r="13" fill="#fff" stroke="#000" stroke-width="4"/>` +
    [[-5, -6], [5, -6], [0, 0], [-5, 6], [5, 6]].map(([a, b]) => `<circle cx="${a}" cy="${b}" r="2.500" fill="#e8f0f6" stroke="#24323e" stroke-width="1.500"/>`).join('') +
    '<path d="M-3-3l1 1M3-3L2-2M-3 3l1-1M3 3L2 2" stroke="#000" stroke-width="2"/></g>');
}
function bigConn(x, y) {
  const pins = [[0, -19], [-10, -16], [9, -15], [17, -9], [-17, -7], [-8, -6], [0, -9], [10, -4], [20, 0], [-20, 2], [-11, 2], [0, 1], [10, 4], [18, 9], [-15, 11], [-6, 10], [3, 9], [11, 16], [-8, 19], [2, 19]];
  out.push(`<g transform="translate(${x} ${y})"><path d="M-3-29h5v5h-5zM-27 12h6v6h-6zM21 12h6v6h-6z"/><circle r="25" fill="#bbb" stroke="#000" stroke-width="3"/>` +
    pins.map(([a, b], i) => `<circle cx="${a}" cy="${b}" r="4.500" fill="#fff" stroke="#000" stroke-width="2"/><text x="${a - 1}" y="${b + 2}" class="tiny">${i % 10}</text>`).join('') + '</g>');
}
smallConn(1147, 442); smallConn(902, 470); smallConn(1058, 683);
bigConn(891, 624); bigConn(1440, 414); bigConn(1440, 624);
out.push('<rect x="1195" y="681" width="21" height="11" fill="#637383"/><rect x="1199" y="684" width="14" height="5" fill="#111"/><path d="M1200 685h3v3h-3zM1209 685h3v3h-3zM1205 685h2v3h-2z" fill="#fff"/>');
[[1121, 459, 'C-76664'], [1154, 461, 'LCD-CONN'], [891, 490, 'PWR-CONN'], [879, 656, 'CPR1-CONN'], [922, 470, 'C-76662'], [922, 623, 'C-61270'], [1079, 683, 'C-76663'], [1217, 690, 'C-76666'], [1194, 697, 'SW-CONN1'], [1045, 702, 'SENSO-CONN'],
  [1470, 418, 'C-61270'], [1470, 626, 'C-61270'], [1430, 445, 'CPS-CONN'], [1424, 655, 'AVIONICS-CONN']].forEach(t => text(t[0], t[1], t[2], 'tag'));

// Title block
box(1565, 788, 123, 139);
text(1594, 807, 'Mentor', 'brand');
text(1575, 821, 'Graphics', 'brand');
const g = '#777';
[[1565, 826, 1688], [1579, 831, 1688], [1579, 848, 1688], [1565, 841, 1579], [1565, 844, 1579], [1565, 848, 1688], [1565, 854, 1688], [1565, 861, 1688], [1565, 876, 1688], [1565, 885, 1592], [1565, 890, 1592], [1565, 901, 1592], [1565, 903, 1688], [1565, 915, 1688],
  [1634, 881, 1688], [1634, 885, 1688], [1634, 890, 1688], [1634, 894, 1688], [1634, 899, 1688], [1651, 918, 1688]].forEach(([x, y, x2]) => crisp(x, y, x2, y, g));
[[1579, 826, 876], [1633, 832, 848], [1655, 848, 861], [1592, 876, 927], [1633, 876, 903], [1673, 876, 903], [1650, 915, 927], [1676, 915, 927], [1617, 857, 861]].forEach(([x, y, y2]) => crisp(x, y, x, y2, g));
[[1580, 827, 91, 3], [1580, 831, 82, 3], [1566, 841, 16, 3], [1580, 848, 24, 3], [1656, 848, 15, 3], [1566, 855, 16, 3], [1596, 855, 41, 3], [1580, 862, 98, 10], [1593, 876, 21, 3], [1634, 877, 14, 3], [1634, 886, 12, 2], [1634, 891, 13, 2], [1566, 886, 25, 4], [1566, 893, 26, 6],
  [1572, 903, 46, 4], [1567, 908, 25, 6], [1566, 916, 23, 5], [1592, 916, 26, 3], [1657, 916, 18, 2], [1678, 916, 9, 3], [1576, 923, 5, 4]].forEach(a => box(...a));
out.push('<rect x="1673" y="872" width="7" height="4" fill="#777"/>');
[[1587, 843, 'Harness designer'], [1634, 843, '1/1/14 AM'], [1600, 911, 'Aerospace Harness'], [1600, 924, 'AA12346_1'], [1657, 924, 'Draft'], [1680, 924, '1']].forEach(t => text(t[0], t[1], t[2], 'stamp'));
[1663, 1671, 1679].forEach(x => crisp(x, 855, x, 857, '#333'));

document.getElementById('diagram').innerHTML = out.join('');
```
